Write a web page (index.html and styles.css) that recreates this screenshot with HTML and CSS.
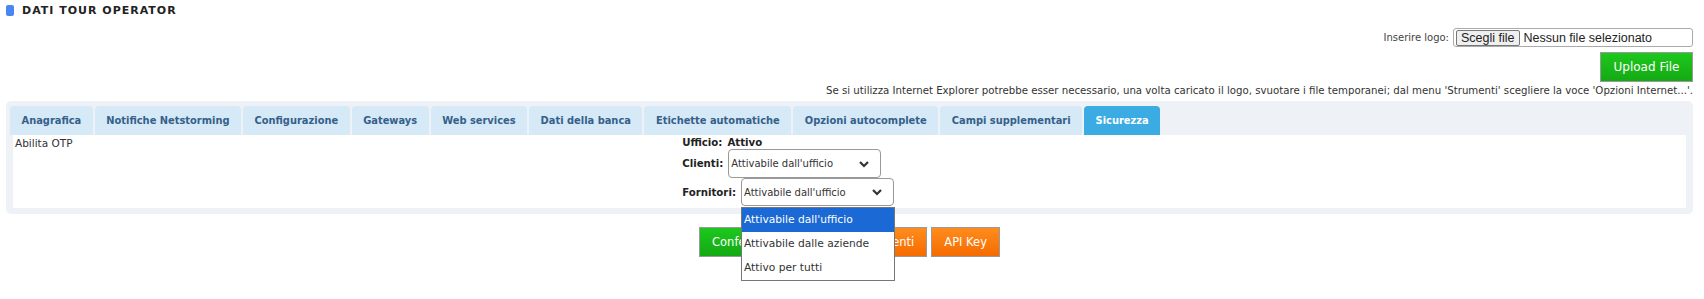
FILE: index.html
```html
<!DOCTYPE html>
<html lang="it">
<head>
  <meta charset="UTF-8" />
  <title>Dati Tour Operator</title>
  <link rel="stylesheet" href="styles.css">
</head>
<body>
  <!-- Intestazione -->
  <div class="head">
    <span class="mark"></span>
    <h1>DATI TOUR OPERATOR</h1>
  </div>

  <!-- Logo -->
  <div class="logo-row">
    <span class="logo-label">Inserire logo:</span>
    <div class="file">
      <span class="file-btn">Scegli file</span>
      <span class="file-name">Nessun file selezionato</span>
    </div>
  </div>
  <div class="upload-row">
    <button class="btn green">Upload File</button>
  </div>
  <p class="note">Se si utilizza Internet Explorer potrebbe esser necessario, una volta caricato il logo, svuotare i file temporanei; dal menu 'Strumenti' scegliere la voce 'Opzioni Internet...'.</p>

  <!-- Schede -->
  <div class="tabs-box">
    <ul class="tabs">
      <li>Anagrafica</li>
      <li>Notifiche Netstorming</li>
      <li>Configurazione</li>
      <li>Gateways</li>
      <li>Web services</li>
      <li>Dati della banca</li>
      <li>Etichette automatiche</li>
      <li>Opzioni autocomplete</li>
      <li>Campi supplementari</li>
      <li class="active">Sicurezza</li>
    </ul>
    <div class="panel">
      <div class="col-left">Abilita OTP</div>
      <div class="col-right">
        <div class="row">
          <span class="lbl">Ufficio:</span>
          <span class="lbl">Attivo</span>
        </div>
        <div class="row">
          <span class="lbl">Clienti:</span>
          <div class="select">
            <span>Attivabile dall'ufficio</span>
            <svg class="chev" width="12" height="8" viewBox="0 0 12 8"><polyline points="2,2 6,6 10,2" fill="none" stroke="#333" stroke-width="2.2"/></svg>
          </div>
        </div>
        <div class="row">
          <span class="lbl">Fornitori:</span>
          <div class="select open">
            <span>Attivabile dall'ufficio</span>
            <svg class="chev" width="12" height="8" viewBox="0 0 12 8"><polyline points="2,2 6,6 10,2" fill="none" stroke="#333" stroke-width="2.2"/></svg>
            <ul class="options">
              <li class="sel">Attivabile dall'ufficio</li>
              <li>Attivabile dalle aziende</li>
              <li>Attivo per tutti</li>
            </ul>
          </div>
        </div>
      </div>
    </div>
  </div>

  <!-- Azioni -->
  <div class="actions">
    <button class="btn green">Conferma</button>
    <button class="btn orange">Gestione documenti</button>
    <button class="btn orange">API Key</button>
  </div>
</body>
</html>
```

FILE: styles.css
```css
* {
  margin: 0;
  padding: 0;
  box-sizing: border-box;
}
body {
  font-family: 'DejaVu Sans', sans-serif;
  color: #333;
  background: #fff;
  padding: 0 11px 0 6px;
  height: 299px;
  overflow: hidden;
}
.head {
  display: flex;
  align-items: center;
  gap: 8px;
  height: 22px;
  padding-bottom: 2px;
}
.mark {
  width: 8px;
  height: 11px;
  background: #4a86f0;
  border-radius: 2px;
}
h1 {
  font-size: 11px;
  font-weight: bold;
  letter-spacing: 1px;
  color: #222;
}
.logo-row {
  display: flex;
  justify-content: flex-end;
  align-items: center;
  gap: 4px;
  margin-top: 6px;
}
.logo-label {
  font-size: 10px;
  color: #444;
}
.file {
  width: 240px;
  height: 19px;
  border: 1px solid #aaa;
  border-radius: 3px;
  display: flex;
  align-items: center;
  gap: 4px;
  padding-left: 2px;
  font-family: 'Liberation Sans', Arial, sans-serif;
  font-size: 12.5px;
  color: #222;
}
.file-btn {
  border: 1px solid #777;
  background: #efefef;
  border-radius: 2px;
  padding: 0 4px;
  line-height: 14px;
}
.upload-row {
  display: flex;
  justify-content: flex-end;
  margin-top: 5px;
}
.btn {
  height: 30px;
  padding: 0 12px;
  border: 1px solid #9a9a9a;
  color: #fff;
  font-family: 'DejaVu Sans', sans-serif;
  font-size: 11.5px;
  white-space: nowrap;
  cursor: pointer;
}
.green {
  background: linear-gradient(#1dc81d, #14a914);
}
.orange {
  background: linear-gradient(#ff8c1e, #f56b00);
}
.upload-row .btn {
  width: 93px;
  padding: 0;
  font-size: 12px;
}
.note {
  text-align: right;
  font-size: 10.2px;
  color: #333;
  margin-top: 2px;
  line-height: 14px;
}
.tabs-box {
  margin-top: 3px;
  background: #eef2f6;
  border-radius: 5px;
  padding: 5px 7px 6px 7px;
}
.tabs {
  list-style: none;
  display: flex;
  gap: 2px;
  margin-left: -3px;
}
.tabs li {
  height: 29px;
  line-height: 29px;
  padding: 0 11.5px;
  background: #d6e9f7;
  color: #35608a;
  font-size: 9.9px;
  font-weight: bold;
  border-radius: 4px 4px 0 0;
}
.tabs li.active {
  background: #3aabe3;
  color: #fff;
}
.panel {
  background: #fff;
  height: 73px;
  display: grid;
  grid-template-columns: 40% 60%;
  font-size: 10.5px;
  color: #333;
}
.col-left {
  padding: 2px;
}
.col-right {
  display: flex;
  flex-direction: column;
}
.row {
  display: flex;
  align-items: center;
  gap: 5px;
}
.row:first-child {
  height: 14px;
}
.lbl {
  font-weight: bold;
  color: #222;
  font-size: 10.2px;
}
.select {
  position: relative;
  width: 153px;
  height: 29px;
  border: 1px solid #999;
  border-radius: 4px;
  display: flex;
  align-items: center;
  justify-content: space-between;
  padding: 0 10px 0 2px;
  font-size: 10px;
  color: #333;
}
.select.open {
  height: 28px;
}
.options {
  position: absolute;
  top: 28px;
  left: -1px;
  width: 154px;
  list-style: none;
  background: #fff;
  border: 1px solid #767676;
  z-index: 2;
}
.options li {
  height: 24px;
  line-height: 24px;
  padding-left: 2px;
  font-size: 10.7px;
  color: #333;
}
.options li.sel {
  background: #1b69d4;
  color: #fff;
}
.actions {
  display: flex;
  justify-content: center;
  gap: 4px;
  margin-top: 13px;
}
```
